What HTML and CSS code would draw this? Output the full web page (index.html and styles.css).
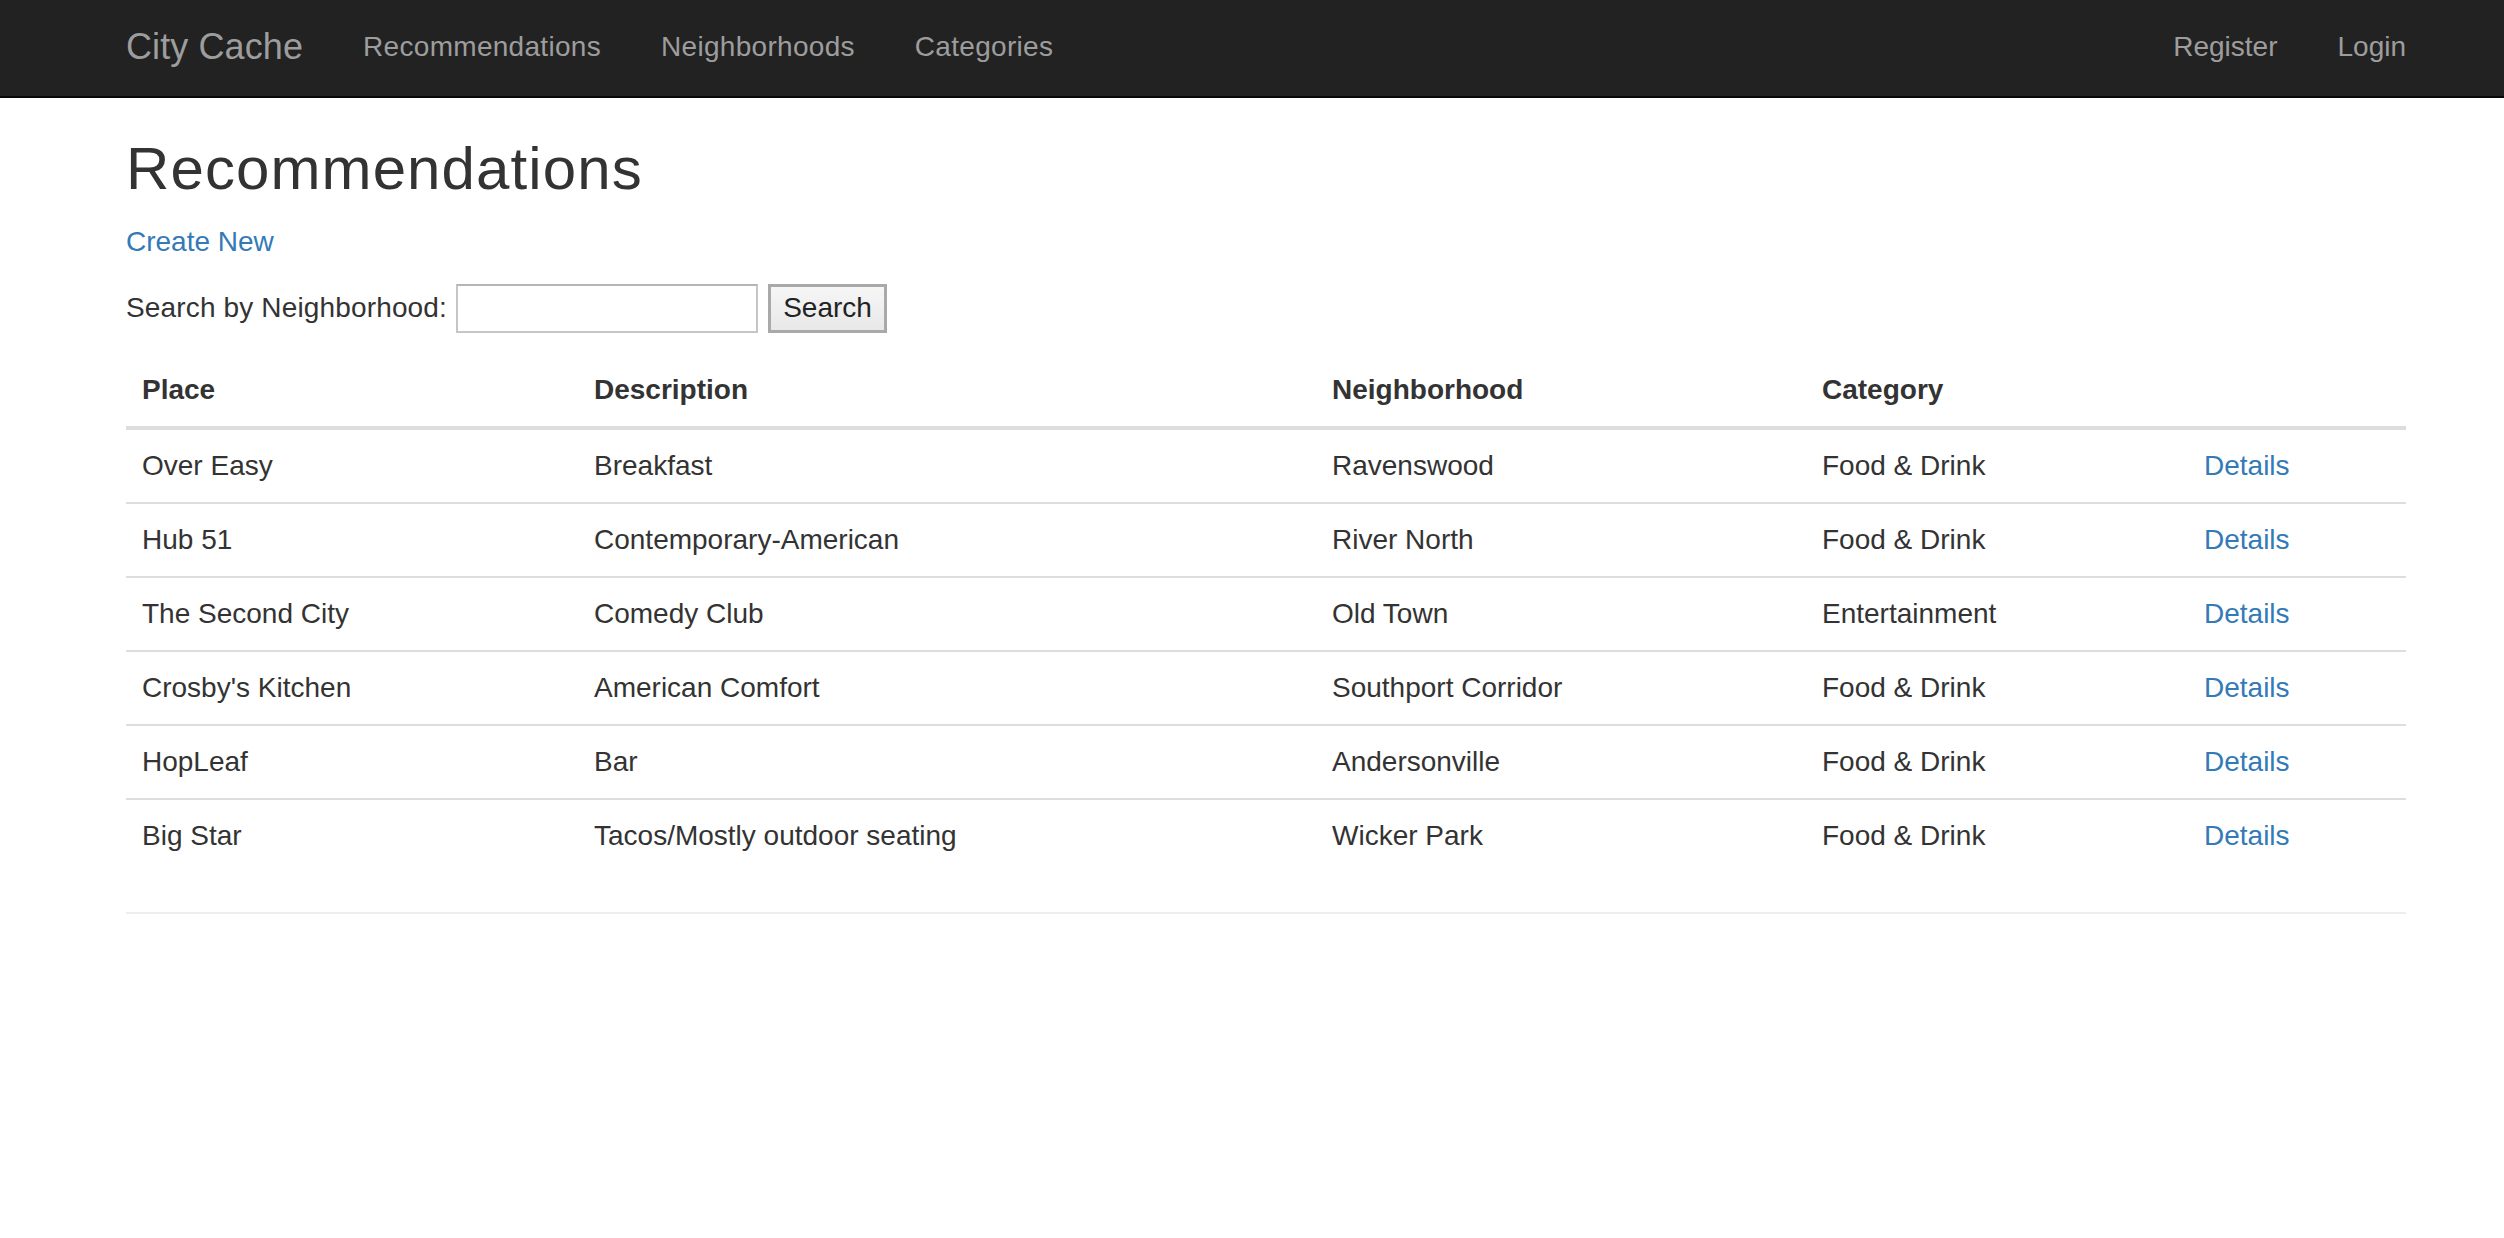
FILE: index.html
```html
<!DOCTYPE html>
<html lang="en">
<head>
<meta charset="utf-8">
<title>Recommendations - City Cache</title>
<link rel="stylesheet" href="styles.css">
</head>
<body>
<nav class="navbar">
  <div class="navbar-inner">
    <a class="brand" href="#">City Cache</a>
    <ul class="nav nav-left">
      <li><a href="#">Recommendations</a></li>
      <li><a href="#">Neighborhoods</a></li>
      <li><a href="#">Categories</a></li>
    </ul>
    <ul class="nav nav-right">
      <li><a href="#">Register</a></li>
      <li><a href="#">Login</a></li>
    </ul>
  </div>
</nav>
<main class="body-content">
  <h2 class="page-title">Recommendations</h2>
  <p class="create"><a href="#">Create New</a></p>
  <form class="search-form">
    <label class="search-label" for="nb">Search by Neighborhood:</label>
    <input class="search-input" id="nb" type="text">
    <button class="search-button" type="button">Search</button>
  </form>
  <table class="table">
    <thead>
      <tr>
        <th class="col-place">Place</th>
        <th class="col-desc">Description</th>
        <th class="col-hood">Neighborhood</th>
        <th class="col-cat">Category</th>
        <th class="col-act"></th>
      </tr>
    </thead>
    <tbody>
      <tr><td>Over Easy</td><td>Breakfast</td><td>Ravenswood</td><td>Food &amp; Drink</td><td><a href="#">Details</a></td></tr>
      <tr><td>Hub 51</td><td>Contemporary-American</td><td>River North</td><td>Food &amp; Drink</td><td><a href="#">Details</a></td></tr>
      <tr><td>The Second City</td><td>Comedy Club</td><td>Old Town</td><td>Entertainment</td><td><a href="#">Details</a></td></tr>
      <tr><td>Crosby's Kitchen</td><td>American Comfort</td><td>Southport Corridor</td><td>Food &amp; Drink</td><td><a href="#">Details</a></td></tr>
      <tr><td>HopLeaf</td><td>Bar</td><td>Andersonville</td><td>Food &amp; Drink</td><td><a href="#">Details</a></td></tr>
      <tr><td>Big Star</td><td>Tacos/Mostly outdoor seating</td><td>Wicker Park</td><td>Food &amp; Drink</td><td><a href="#">Details</a></td></tr>
    </tbody>
  </table>
  <hr class="divider">
  <footer class="footer"></footer>
</main>
</body>
</html>
```

FILE: styles.css
```css
html, body {
  margin: 0;
  padding: 0;
  background: #fff;
}
body {
  font-family: "Liberation Sans", Arial, sans-serif;
  font-size: 28px;
  line-height: 40px;
  color: #333;
}
a {
  color: #337ab7;
  text-decoration: none;
}

/* Navbar */
.navbar {
  background: #222;
  height: 96px;
  border-bottom: 2px solid #080808;
}
.navbar-inner {
  display: flex;
  margin-left: 96px;
  width: 2340px;
  height: 96px;
}
.brand {
  display: block;
  padding: 0 30px;
  font-size: 36px;
  line-height: 94px;
  letter-spacing: 0.1px;
  color: #9d9d9d;
}
.nav {
  display: flex;
  list-style: none;
  margin: 0;
  padding: 0;
}
.nav-left a {
  letter-spacing: 0.3px;
}
.nav-right {
  margin-left: auto;
}
.nav a {
  display: block;
  padding: 0 30px;
  line-height: 94px;
  color: #9d9d9d;
}

/* Body */
.body-content {
  margin-left: 126px;
  width: 2280px;
}
.page-title {
  margin: 38px 0 20px;
  font-size: 60px;
  line-height: 66px;
  font-weight: 500;
  letter-spacing: 1.1px;
  color: #333;
}
.create {
  margin: 0 0 20px;
}
.search-form {
  display: flex;
  align-items: center;
  height: 52px;
  margin: 0;
}
.search-label {
  line-height: 40px;
  letter-spacing: 0.15px;
  color: #333;
}
.search-input {
  box-sizing: border-box;
  width: 302px;
  height: 49px;
  margin: 0 0 0 9px;
  padding: 2px 4px;
  border: 2px solid #c6c6c6;
  border-top-color: #b5b5b5;
  background: #fff;
  font: inherit;
}
.search-button {
  box-sizing: border-box;
  width: 119px;
  height: 49px;
  margin: 0 0 0 10px;
  padding: 0;
  border: 3px solid #a9a9a9;
  border-radius: 0;
  background: linear-gradient(#f6f6f6, #e8e8e8);
  font-family: inherit;
  font-size: 28px;
  color: #222;
}

/* Table */
.table {
  width: 2280px;
  margin: 20px 0 40px;
  border-collapse: separate;
  border-spacing: 0;
  table-layout: fixed;
}
.table th,
.table td {
  box-sizing: border-box;
  padding: 16px;
  line-height: 40px;
  text-align: left;
  vertical-align: top;
  white-space: nowrap;
}
.table th {
  font-weight: bold;
  border-bottom: 4px solid #ddd;
}
.table td {
  border-top: 2px solid #ddd;
}
.table tbody tr:first-child td {
  border-top: 0;
}
.col-place { width: 452px; }
.col-desc { width: 738px; }
.col-hood { width: 490px; }
.col-cat { width: 382px; }
.col-act { width: 218px; }

.divider {
  margin: 0;
  border: 0;
  border-top: 2px solid #eee;
  height: 0;
}
.footer {
  height: 0;
}
```
